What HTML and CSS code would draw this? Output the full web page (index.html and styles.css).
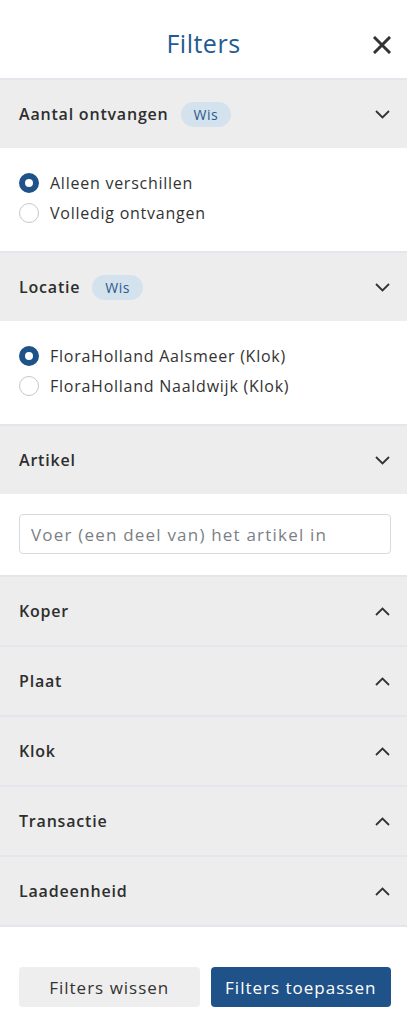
FILE: index.html
```html
<!DOCTYPE html>
<html lang="nl">
<head>
<meta charset="utf-8">
<title>Filters</title>
<link rel="stylesheet" href="styles.css">
</head>
<body>
<div class="panel">
  <header class="top">
    <h1 class="title">Filters</h1>
    <button class="close" aria-label="Sluiten">
      <svg width="18" height="18" viewBox="0 0 18 18"><path d="M2 2 L16 16 M16 2 L2 16" stroke="#333" stroke-width="3" stroke-linecap="square" fill="none"/></svg>
    </button>
  </header>

  <section class="sec">
    <div class="sec-head">
      <span class="label">Aantal ontvangen</span><span class="badge">Wis</span>
      <svg class="chev" width="15" height="9" viewBox="0 0 15 9"><path d="M1 1 L7.5 7.5 L14 1" stroke="#333" stroke-width="1.8" fill="none"/></svg>
    </div>
    <div class="sec-body radios">
      <label class="radio"><span class="dot on"></span>Alleen verschillen</label>
      <label class="radio"><span class="dot"></span>Volledig ontvangen</label>
    </div>
  </section>

  <section class="sec">
    <div class="sec-head">
      <span class="label">Locatie</span><span class="badge">Wis</span>
      <svg class="chev" width="15" height="9" viewBox="0 0 15 9"><path d="M1 1 L7.5 7.5 L14 1" stroke="#333" stroke-width="1.8" fill="none"/></svg>
    </div>
    <div class="sec-body radios">
      <label class="radio"><span class="dot on"></span>FloraHolland Aalsmeer (Klok)</label>
      <label class="radio"><span class="dot"></span>FloraHolland Naaldwijk (Klok)</label>
    </div>
  </section>

  <section class="sec">
    <div class="sec-head">
      <span class="label">Artikel</span>
      <svg class="chev" width="15" height="9" viewBox="0 0 15 9"><path d="M1 1 L7.5 7.5 L14 1" stroke="#333" stroke-width="1.8" fill="none"/></svg>
    </div>
    <div class="sec-body field">
      <input class="input" type="text" placeholder="Voer (een deel van) het artikel in">
    </div>
  </section>

  <section class="sec">
    <div class="sec-head"><span class="label">Koper</span>
      <svg class="chev" width="15" height="9" viewBox="0 0 15 9"><path d="M1 8 L7.5 1.5 L14 8" stroke="#333" stroke-width="1.8" fill="none"/></svg></div>
  </section>
  <section class="sec">
    <div class="sec-head"><span class="label">Plaat</span>
      <svg class="chev" width="15" height="9" viewBox="0 0 15 9"><path d="M1 8 L7.5 1.5 L14 8" stroke="#333" stroke-width="1.8" fill="none"/></svg></div>
  </section>
  <section class="sec">
    <div class="sec-head"><span class="label">Klok</span>
      <svg class="chev" width="15" height="9" viewBox="0 0 15 9"><path d="M1 8 L7.5 1.5 L14 8" stroke="#333" stroke-width="1.8" fill="none"/></svg></div>
  </section>
  <section class="sec">
    <div class="sec-head"><span class="label">Transactie</span>
      <svg class="chev" width="15" height="9" viewBox="0 0 15 9"><path d="M1 8 L7.5 1.5 L14 8" stroke="#333" stroke-width="1.8" fill="none"/></svg></div>
  </section>
  <section class="sec last">
    <div class="sec-head"><span class="label">Laadeenheid</span>
      <svg class="chev" width="15" height="9" viewBox="0 0 15 9"><path d="M1 8 L7.5 1.5 L14 8" stroke="#333" stroke-width="1.8" fill="none"/></svg></div>
  </section>

  <footer class="actions">
    <button class="btn btn-light">Filters wissen</button>
    <button class="btn btn-primary">Filters toepassen</button>
  </footer>
</div>
</body>
</html>
```

FILE: styles.css
```css
* { box-sizing: border-box; }
html, body { margin: 0; padding: 0; background: #fff; }
body {
  font-family: "Open Sans", "Liberation Sans", sans-serif;
  color: #333;
  width: 407px;
}
.panel { display: flex; flex-direction: column; }

.top {
  height: 78px;
  display: flex;
  align-items: center;
  justify-content: center;
  position: relative;
}
.title {
  margin: 0;
  font-size: 25px;
  font-weight: 400;
  letter-spacing: 0.5px;
  color: #235a92;
  padding-top: 8px;
}
.close {
  position: absolute;
  right: 16px;
  top: 36px;
  border: 0;
  background: none;
  padding: 0;
  width: 18px;
  height: 18px;
  display: flex;
}

.sec { border-top: 2px solid #e3e6ea; }
.sec.last { border-bottom: 2px solid #e3e6ea; }
.sec-head {
  height: 68px;
  background: #ededed;
  display: flex;
  align-items: center;
  padding: 0 17px 0 19px;
}
.label {
  font-size: 16px;
  font-weight: 600;
  letter-spacing: 0.8px;
  color: #2e2e2e;
}
.badge {
  margin-left: 12px;
  height: 25px;
  padding: 0 13px;
  border-radius: 13px;
  background: #d4e2ee;
  color: #2c5b8c;
  font-size: 14px;
  letter-spacing: 0.5px;
  display: flex;
  align-items: center;
}
.chev { margin-left: auto; }

.sec-body.radios {
  height: 103px;
  padding: 20px 19px 0;
  display: flex;
  flex-direction: column;
}
.radio {
  height: 30px;
  display: flex;
  align-items: center;
  gap: 11px;
  font-size: 16px;
  letter-spacing: 0.75px;
  color: #333;
}
.dot {
  width: 20px;
  height: 20px;
  border-radius: 50%;
  border: 1px solid #c5c8cc;
  background: #fff;
  flex: none;
}
.dot.on {
  border: 6.5px solid #1f5289;
  background: #fff;
}

.sec-body.field {
  height: 81px;
  padding: 20px 16px 0 19px;
}
.input {
  width: 100%;
  height: 40px;
  border: 1px solid #d6d9dd;
  border-radius: 4px;
  padding: 0 11px;
  font-family: inherit;
  font-size: 17px;
  letter-spacing: 1.2px;
  color: #333;
  outline: none;
}
.input::placeholder { color: #7b7f85; }

.actions {
  display: flex;
  gap: 11px;
  padding: 40px 16px 0 19px;
}
.btn {
  flex: 1;
  height: 40px;
  border: 0;
  border-radius: 4px;
  font-family: inherit;
  font-size: 17px;
  letter-spacing: 1px;
}
.btn-light { background: #eeeeee; color: #333; }
.btn-primary { background: #1f5289; color: #fff; }
```
